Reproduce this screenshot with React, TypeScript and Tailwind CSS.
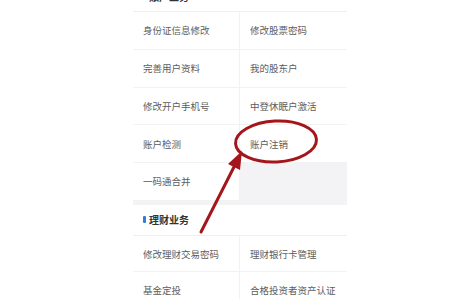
const CELL_FONT = "font-['Noto_Sans_CJK_SC','Noto_Sans',sans-serif]";

const sectionOne: (string | null)[] = [
  "身份证信息修改",
  "修改股票密码",
  "完善用户资料",
  "我的股东户",
  "修改开户手机号",
  "中登休眠户激活",
  "账户检测",
  "账户注销",
  "一码通合并",
  null,
];

const sectionTwo: string[] = ["修改理财交易密码", "理财银行卡管理", "基金定投", "合格投资者资产认证"];

const SectionHeader = ({ title }: { title: string }) => (
  <div className="flex h-[31px] items-center gap-[3px] border-b border-[#f0f0f0] pl-[10px]">
    <span className="h-[7px] w-[3px] rounded-[1px] bg-[#2f7fd8]" />
    <span className="text-[10px] font-bold text-[#333]">{title}</span>
  </div>
);

const Grid = ({ items, rowH }: { items: (string | null)[]; rowH: string }) => (
  <div className="grid grid-cols-2">
    {items.map((label, i) =>
      label === null ? (
        <div key={i} className={`${rowH} bg-[#f3f3f5]`} />
      ) : (
        <div
          key={i}
          className={`flex ${rowH} items-center border-b border-[#f2f2f2] pl-[10px] text-[9.5px] text-[#5c5c5c] ${
            i % 2 === 0 ? "border-r" : ""
          }`}
        >
          {label}
        </div>
      )
    )}
  </div>
);

export default function App() {
  return (
    <div className={`relative h-[299px] w-[454px] overflow-hidden bg-white ${CELL_FONT}`}>
      <div className="ml-[133px] mt-[-19px] w-[214px]">
        <SectionHeader title="账户业务" />
        <Grid items={sectionOne} rowH="h-[37.8px]" />
        <div className="h-[4px] bg-[#f3f3f5]" />
        <SectionHeader title="理财业务" />
        <Grid items={sectionTwo} rowH="h-[36.5px]" />
      </div>

      {/* red hand-drawn annotation */}
      <svg className="pointer-events-none absolute left-0 top-0" width="454" height="299" viewBox="0 0 454 299">
        <ellipse
          cx="276"
          cy="141.5"
          rx="40.5"
          ry="20.5"
          fill="none"
          stroke="#a3161c"
          strokeWidth="3"
          transform="rotate(-3 276 141.5)"
        />
        <line x1="201" y1="232" x2="236" y2="163" stroke="#a3161c" strokeWidth="3" strokeLinecap="round" />
        <polygon points="242,151 240,170 228,164" fill="#a3161c" />
      </svg>
    </div>
  );
}
